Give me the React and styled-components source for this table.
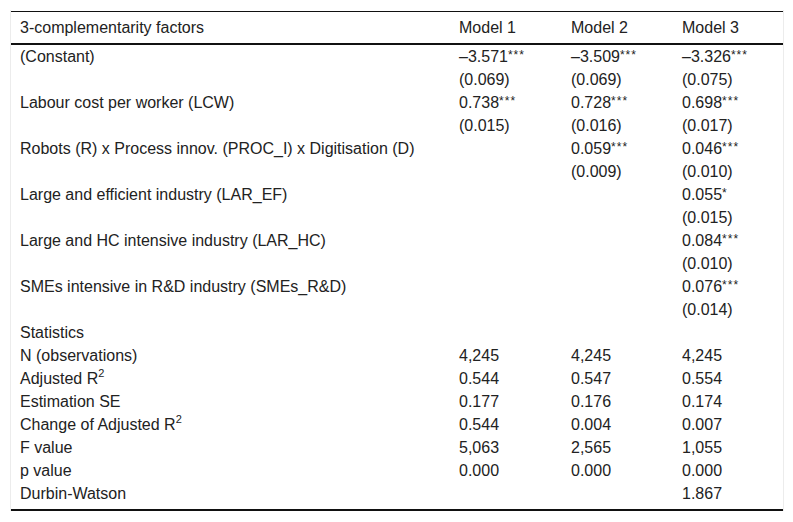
import React from "react";
import styled, { createGlobalStyle } from "styled-components";

const GlobalStyle = createGlobalStyle`
  body {
    margin: 0;
    background: #fff;
    font-family: "Liberation Sans", Arial, sans-serif;
  }
`;

const TableWrap = styled.div`
  margin: 10px 9px 0 10px;
  padding-top: 1px;
  border-left: 1px solid #ececec;
  border-right: 1px solid #ececec;
`;

const Table = styled.table`
  width: 100%;
  border-collapse: collapse;
  table-layout: fixed;
  font-size: 16px;
  color: #222;
`;

const HeadCell = styled.th`
  text-align: left;
  font-weight: normal;
  height: 31px;
  padding: 0 0 0 9px;
  border-top: 1px solid #111;
  border-bottom: 2px solid #111;
  vertical-align: middle;
  white-space: nowrap;
`;

const Cell = styled.td`
  height: 23px;
  padding: 0 0 ${(p) => (p.$last ? "4px" : "0")} 9px;
  vertical-align: ${(p) => (p.$last ? "top" : "middle")};
  line-height: 23px;
  white-space: nowrap;
  border-bottom: ${(p) => (p.$last ? "2px solid #111" : "none")};
`;

const Sup = styled.sup`
  font-size: 11px;
  line-height: 0;
  position: relative;
  top: -1px;
  vertical-align: super;
`;

const StarMark = styled.span`
  font-size: 12px;
  line-height: 0;
  letter-spacing: 1px;
  position: relative;
  top: -3px;
`;

const coef = (v, n) => (
  <>
    {v}
    <StarMark>{"*".repeat(n)}</StarMark>
  </>
);

const rows = [
  ["(Constant)", coef("–3.571", 3), coef("–3.509", 3), coef("–3.326", 3)],
  ["", "(0.069)", "(0.069)", "(0.075)"],
  ["Labour cost per worker (LCW)", coef("0.738", 3), coef("0.728", 3), coef("0.698", 3)],
  ["", "(0.015)", "(0.016)", "(0.017)"],
  ["Robots (R) x Process innov. (PROC_I) x Digitisation (D)", "", coef("0.059", 3), coef("0.046", 3)],
  ["", "", "(0.009)", "(0.010)"],
  ["Large and efficient industry (LAR_EF)", "", "", coef("0.055", 1)],
  ["", "", "", "(0.015)"],
  ["Large and HC intensive industry (LAR_HC)", "", "", coef("0.084", 3)],
  ["", "", "", "(0.010)"],
  ["SMEs intensive in R&D industry (SMEs_R&D)", "", "", coef("0.076", 3)],
  ["", "", "", "(0.014)"],
  ["Statistics", "", "", ""],
  ["N (observations)", "4,245", "4,245", "4,245"],
  [<>Adjusted R<Sup>2</Sup></>, "0.544", "0.547", "0.554"],
  ["Estimation SE", "0.177", "0.176", "0.174"],
  [<>Change of Adjusted R<Sup>2</Sup></>, "0.544", "0.004", "0.007"],
  ["F value", "5,063", "2,565", "1,055"],
  ["p value", "0.000", "0.000", "0.000"],
  ["Durbin-Watson", "", "", "1.867"],
];

export default function App() {
  return (
    <>
      <GlobalStyle />
      <TableWrap>
        <Table>
          <colgroup>
            <col style={{ width: 439 }} />
            <col style={{ width: 112 }} />
            <col style={{ width: 111 }} />
            <col />
          </colgroup>
          <thead>
            <tr>
              <HeadCell>3-complementarity factors</HeadCell>
              <HeadCell>Model 1</HeadCell>
              <HeadCell>Model 2</HeadCell>
              <HeadCell>Model 3</HeadCell>
            </tr>
          </thead>
          <tbody>
            {rows.map((r, i) => (
              <tr key={i}>
                {r.map((c, j) => (
                  <Cell key={j} $last={i === rows.length - 1}>
                    {c}
                  </Cell>
                ))}
              </tr>
            ))}
          </tbody>
        </Table>
      </TableWrap>
    </>
  );
}
